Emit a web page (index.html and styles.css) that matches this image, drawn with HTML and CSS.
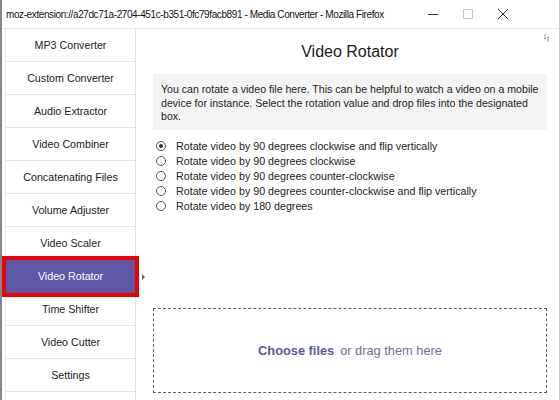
FILE: index.html
```html
<!DOCTYPE html>
<html>
<head>
<meta charset="utf-8">
<link rel="stylesheet" href="styles.css">
</head>
<body>
<div class="window">
  <div class="titlebar">
    <span class="title">moz-extension://a27dc71a-2704-451c-b351-0fc79facb891 - Media Converter - Mozilla Firefox</span>
    <div class="controls">
      <svg class="ctl" width="12" height="12" viewBox="0 0 12 12"><line x1="1" y1="6.5" x2="11" y2="6.5" stroke="#333" stroke-width="1"/></svg>
      <svg class="ctl" width="12" height="12" viewBox="0 0 12 12"><rect x="1.5" y="1.5" width="9" height="9" fill="none" stroke="#c8c8c8" stroke-width="1"/></svg>
      <svg class="ctl" width="12" height="12" viewBox="0 0 12 12"><path d="M1 1 L11 11 M11 1 L1 11" stroke="#333" stroke-width="1"/></svg>
    </div>
  </div>
  <div class="page">
    <nav class="sidebar">
      <div class="item">MP3 Converter</div>
      <div class="item">Custom Converter</div>
      <div class="item">Audio Extractor</div>
      <div class="item">Video Combiner</div>
      <div class="item">Concatenating Files</div>
      <div class="item">Volume Adjuster</div>
      <div class="item">Video Scaler</div>
      <div class="item active">Video Rotator<span class="arrow"></span></div>
      <div class="item">Time Shifter</div>
      <div class="item">Video Cutter</div>
      <div class="item">Settings</div>
    </nav>
    <main class="main">
      <svg class="corner-icon" width="8" height="10" viewBox="0 0 8 10"><path d="M2 1 L2 6 M1 5 L2 6 L3 5 M5 9 L5 4 M4 5 L5 4 L6 5" stroke="#9a9a9a" stroke-width="1" fill="none"/></svg>
      <h1 class="heading">Video Rotator</h1>
      <div class="info">You can rotate a video file here. This can be helpful to watch a video on a mobile device for instance. Select the rotation value and drop files into the designated box.</div>
      <div class="options">
        <label class="opt"><span class="radio checked"></span>Rotate video by 90 degrees clockwise and flip vertically</label>
        <label class="opt"><span class="radio"></span>Rotate video by 90 degrees clockwise</label>
        <label class="opt"><span class="radio"></span>Rotate video by 90 degrees counter-clockwise</label>
        <label class="opt"><span class="radio"></span>Rotate video by 90 degrees counter-clockwise and flip vertically</label>
        <label class="opt"><span class="radio"></span>Rotate video by 180 degrees</label>
      </div>
      <div class="drop"><b class="choose">Choose files</b><span class="drag">or drag them here</span></div>
    </main>
  </div>
</div>
</body>
</html>
```

FILE: styles.css
```css
html, body {
  margin: 0;
  padding: 0;
  background: #fff;
}
.window {
  width: 560px;
  height: 400px;
  box-sizing: border-box;
  border-left: 2px solid #7d8a8a;
  border-right: 1px solid #c9c9c9;
  overflow: hidden;
  display: flex;
  flex-direction: column;
  font-family: "Liberation Sans", Arial, sans-serif;
}
.titlebar {
  height: 29px;
  flex: none;
  display: flex;
  align-items: center;
  justify-content: space-between;
  border-bottom: 1px solid #e6e6e6;
  box-sizing: border-box;
  padding-left: 4px;
}
.title {
  font-family: "Liberation Sans", Arial, sans-serif;
  font-size: 10px;
  letter-spacing: -0.4px;
  color: #111;
  white-space: nowrap;
}
.controls {
  display: flex;
  gap: 23px;
  padding-right: 50px;
}
.ctl { display: block; }
.page {
  flex: 1;
  display: flex;
  min-height: 0;
}
.sidebar {
  width: 131px;
  flex: none;
  margin-left: 3px;
  border-left: 1px solid #e8e8e8;
  border-right: 1px solid #e0e0e0;
  box-sizing: border-box;
  display: flex;
  flex-direction: column;
}
.item {
  height: 33px;
  flex: none;
  box-sizing: border-box;
  border-bottom: 1px solid #e4e4e4;
  display: flex;
  align-items: center;
  justify-content: center;
  font-size: 10.7px;
  color: #222;
  position: relative;
}
.item.active {
  background: #5e57a6;
  color: #fff;
  outline: 4px solid #ee0000;
  border-bottom-color: #5e57a6;
  z-index: 1;
}
.arrow {
  position: absolute;
  right: -10px;
  top: 14px;
  width: 0;
  height: 0;
  border-left: 3px solid #666;
  border-top: 3px solid transparent;
  border-bottom: 3px solid transparent;
}
.main {
  flex: 1;
  position: relative;
  padding: 0 12px 0 17px;
  display: flex;
  flex-direction: column;
}
.corner-icon {
  position: absolute;
  right: 8px;
  top: 4px;
}
.heading {
  margin: 12px 0 0 0;
  font-size: 16px;
  font-weight: normal;
  text-align: center;
  color: #1a1a1a;
  height: 33px;
  line-height: 22px;
}
.info {
  background: #f4f4f4;
  font-size: 10.6px;
  line-height: 13.5px;
  color: #222;
  padding: 9px 2px 6px 8px;
}
.options {
  margin-top: 9px;
  display: flex;
  flex-direction: column;
}
.opt {
  height: 15px;
  display: flex;
  align-items: center;
  font-size: 10.7px;
  color: #222;
  white-space: nowrap;
}
.radio {
  width: 10px;
  height: 10px;
  border: 1px solid #555;
  border-radius: 50%;
  box-sizing: border-box;
  margin: 0 10px 0 3px;
  position: relative;
  background: #fff;
}
.radio.checked::after {
  content: "";
  position: absolute;
  left: 2px;
  top: 2px;
  width: 4px;
  height: 4px;
  border-radius: 50%;
  background: #333;
}
.drop {
  margin-top: auto;
  margin-bottom: 7px;
  height: 85px;
  box-sizing: border-box;
  border: 1px dashed #5a5a7a;
  display: flex;
  align-items: center;
  justify-content: center;
  gap: 6px;
  font-size: 12.8px;
}
.choose { color: #565b96; }
.drag { color: #6c6f9e; }
```
